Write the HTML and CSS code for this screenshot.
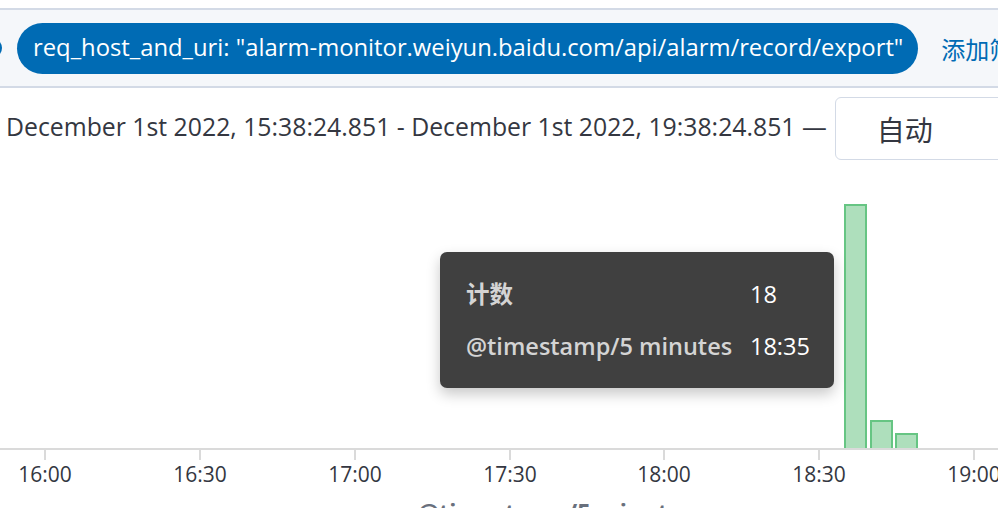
FILE: index.html
```html
<!DOCTYPE html>
<html lang="zh">
<head>
<meta charset="utf-8">
<link rel="stylesheet" href="styles.css">
</head>
<body>
<div class="page">
  <div class="top-gap"></div>
  <div class="filter-bar">
    <span class="edge-dot"></span>
    <span class="pill">req_host_and_uri: "alarm-monitor.weiyun.baidu.com/api/alarm/record/export"</span>
    <span class="add-link">添加筛选</span>
  </div>
  <div class="range-row">
    <span class="range-text">December 1st 2022, 15:38:24.851 - December 1st 2022, 19:38:24.851 —</span>
    <div class="interval-box">自动</div>
  </div>
  <div class="chart">
    <div class="plot">
      <div class="bar" style="left:844px;height:244px"></div>
      <div class="bar" style="left:870px;height:28px"></div>
      <div class="bar" style="left:895px;height:15px"></div>
      <div class="tooltip">
        <span class="tt-label">计数</span><span class="tt-value">18</span>
        <span class="tt-label">@timestamp/5 minutes</span><span class="tt-value">18:35</span>
      </div>
    </div>
    <div class="axis">
      <div class="tick" style="left:45px"><span class="tick-line"></span><span class="tick-label">16:00</span></div>
      <div class="tick" style="left:200px"><span class="tick-line"></span><span class="tick-label">16:30</span></div>
      <div class="tick" style="left:355px"><span class="tick-line"></span><span class="tick-label">17:00</span></div>
      <div class="tick" style="left:510px"><span class="tick-line"></span><span class="tick-label">17:30</span></div>
      <div class="tick" style="left:664px"><span class="tick-line"></span><span class="tick-label">18:00</span></div>
      <div class="tick" style="left:819px"><span class="tick-line"></span><span class="tick-label">18:30</span></div>
      <div class="tick" style="left:974px"><span class="tick-line"></span><span class="tick-label">19:00</span></div>
    </div>
    <div class="axis-title">@timestamp/5 minutes</div>
  </div>
</div>
</body>
</html>
```

FILE: styles.css
```css
* { box-sizing: border-box; }
html, body {
  margin: 0;
  padding: 0;
  background: #fff;
  overflow: hidden;
}
.page {
  width: 998px;
  height: 508px;
  overflow: hidden;
  font-family: "Open Sans", "Noto Sans", "Noto Sans CJK SC", sans-serif;
  color: #343741;
  white-space: nowrap;
}
.top-gap { height: 8px; }
.filter-bar {
  height: 80px;
  background: #f5f7fa;
  border-top: 2px solid #d3dae6;
  border-bottom: 2px solid #d3dae6;
  display: flex;
  align-items: center;
  gap: 15px;
  overflow: hidden;
}
.edge-dot {
  flex: none;
  width: 24px;
  height: 22px;
  margin-left: -22px;
  border-radius: 50%;
  background: #006bb4;
}
.pill {
  flex: none;
  height: 51px;
  display: flex;
  align-items: center;
  padding: 0 15px 0 16px;
  border-radius: 26px;
  background: #006bb4;
  color: #fff;
  font-size: 23.8px;
  line-height: 1;
}
.add-link {
  flex: none;
  margin-left: 8px;
  color: #006bb4;
  font-size: 24px;
  font-family: "Noto Sans CJK SC", sans-serif;
}
.range-row {
  display: flex;
  align-items: center;
  gap: 8px;
  padding: 9px 0 0 6px;
}
.range-text {
  font-size: 24.8px;
  flex: none;
  padding-bottom: 5px;
}
.interval-box {
  flex: none;
  width: 200px;
  height: 63px;
  border: 1px solid #d3dae6;
  border-radius: 6px;
  display: flex;
  align-items: center;
  padding-left: 41px;
  font-size: 28px;
  font-family: "Noto Sans CJK SC", sans-serif;
}
.chart {
  position: relative;
}
.plot {
  position: relative;
  height: 288px;
}
.bar {
  position: absolute;
  bottom: 0;
  width: 23px;
  background: #aedfbc;
  border: 2px solid #66c583;
  border-bottom: none;
}
.tooltip {
  position: absolute;
  left: 440px;
  top: 92px;
  width: 394px;
  height: 136px;
  background: #404040;
  border-radius: 7px;
  box-shadow: 0 6px 14px rgba(0, 0, 0, 0.22);
  padding: 27px 0 0 26px;
  display: grid;
  grid-template-columns: 267px auto;
  column-gap: 17px;
  row-gap: 22px;
  grid-auto-rows: 30px;
  align-items: center;
  font-size: 23.5px;
  line-height: 30px;
}
.tt-label {
  color: #d4d4d4;
  font-weight: 600;
}
.tt-value {
  color: #fff;
}
.axis {
  position: relative;
  height: 48px;
  border-top: 2px solid #dadada;
}
.tick {
  position: absolute;
  top: 0;
  width: 0;
}
.tick-line {
  position: absolute;
  left: -1px;
  top: 0;
  width: 2px;
  height: 10px;
  background: #dadada;
}
.tick-label {
  position: absolute;
  top: 10px;
  left: 0;
  transform: translateX(-50%);
  font-size: 21px;
  line-height: 28px;
  color: #343741;
}
.axis-title {
  padding-left: 418px;
  padding-top: 2px;
  font-size: 23.5px;
  font-weight: 700;
  color: #69707d;
  line-height: 28px;
}
```
